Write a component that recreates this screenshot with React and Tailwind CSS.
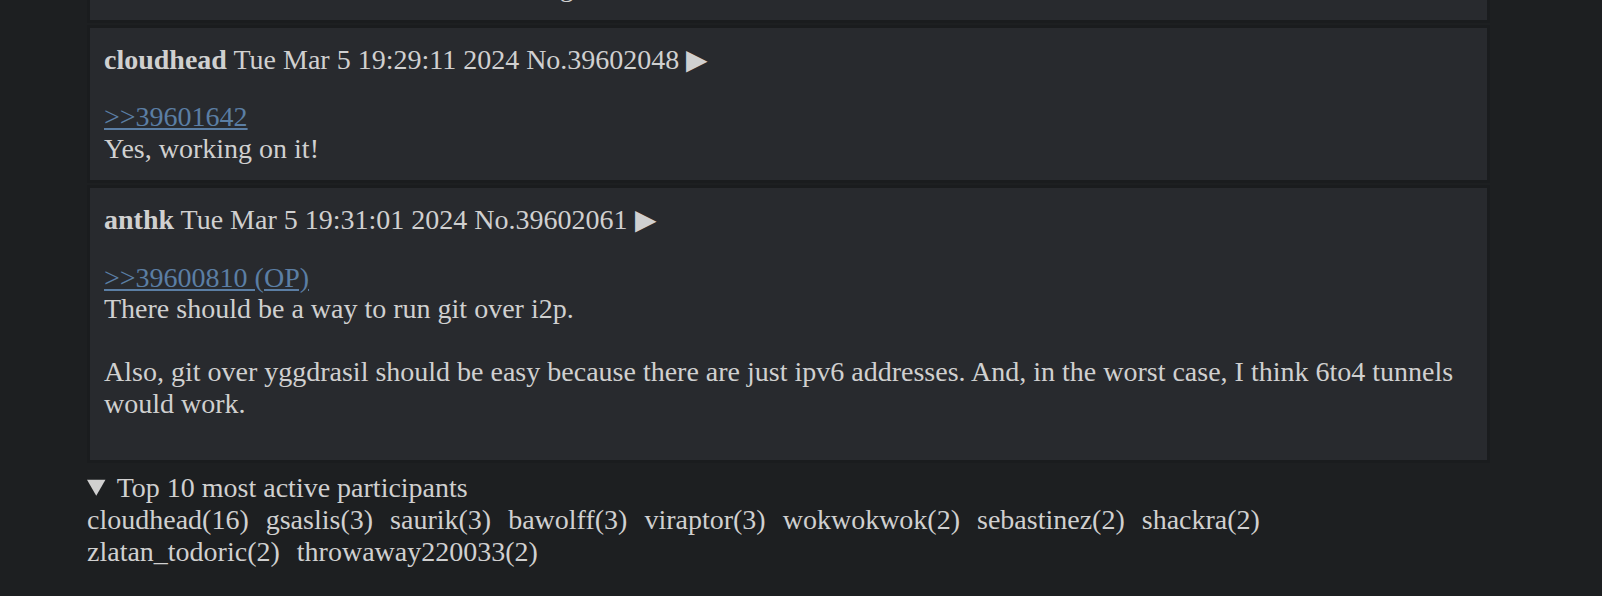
export default function App() {
  const participants = [
    ["cloudhead", 16], ["gsaslis", 3], ["saurik", 3], ["bawolff", 3], ["viraptor", 3],
    ["wokwokwok", 2], ["sebastinez", 2], ["shackra", 2], ["zlatan_todoric", 2], ["throwaway220033", 2],
  ];
  return (
    <div className="min-h-[596px] bg-[#1d1f21] text-[#d0d0d0] text-[28px] leading-[31.5px] font-['Liberation_Serif',serif] overflow-hidden">
      <div className="ml-[87px] w-[1403px] mt-[-44px]">
        <div className="bg-[#282a2e] border-[3px] border-[#1a1c1e] px-[14px] pt-[12px] pb-[17px]">
          <div>That would be the best one to start adding</div>
        </div>
        <div className="mt-[2px] bg-[#282a2e] border-[3px] border-[#1a1c1e] px-[14px] pt-[16px] pb-[16px]">
          <div className="mb-[26px]">
            <b>cloudhead</b> Tue Mar 5 19:29:11 2024 No.39602048 <span>▶</span>
          </div>
          <a className="text-[#5b7ea4] underline">&gt;&gt;39601642</a>
          <div>Yes, working on it!</div>
        </div>
        <div className="mt-[2px] bg-[#282a2e] border-[3px] border-[#1a1c1e] px-[14px] pt-[16px] pb-[9px]">
          <div className="mb-[26px]">
            <b>anthk</b> Tue Mar 5 19:31:01 2024 No.39602061 <span>▶</span>
          </div>
          <a className="text-[#5b7ea4] underline">&gt;&gt;39600810 (OP)</a>
          <div>There should be a way to run git over i2p.</div>
          <br />
          <div>Also, git over yggdrasil should be easy because there are just ipv6 addresses. And, in the worst case, I think 6to4 tunnels would work.</div>
          <br />
        </div>
        <details open className="mt-[9px] leading-[32px]">
          <summary className="cursor-pointer">Top 10 most active participants</summary>
          <div className="flex flex-wrap gap-x-[17px] w-[1300px]">
            {participants.map(([n, c]) => (
              <span key={n}>{n}({c})</span>
            ))}
          </div>
        </details>
      </div>
    </div>
  );
}
